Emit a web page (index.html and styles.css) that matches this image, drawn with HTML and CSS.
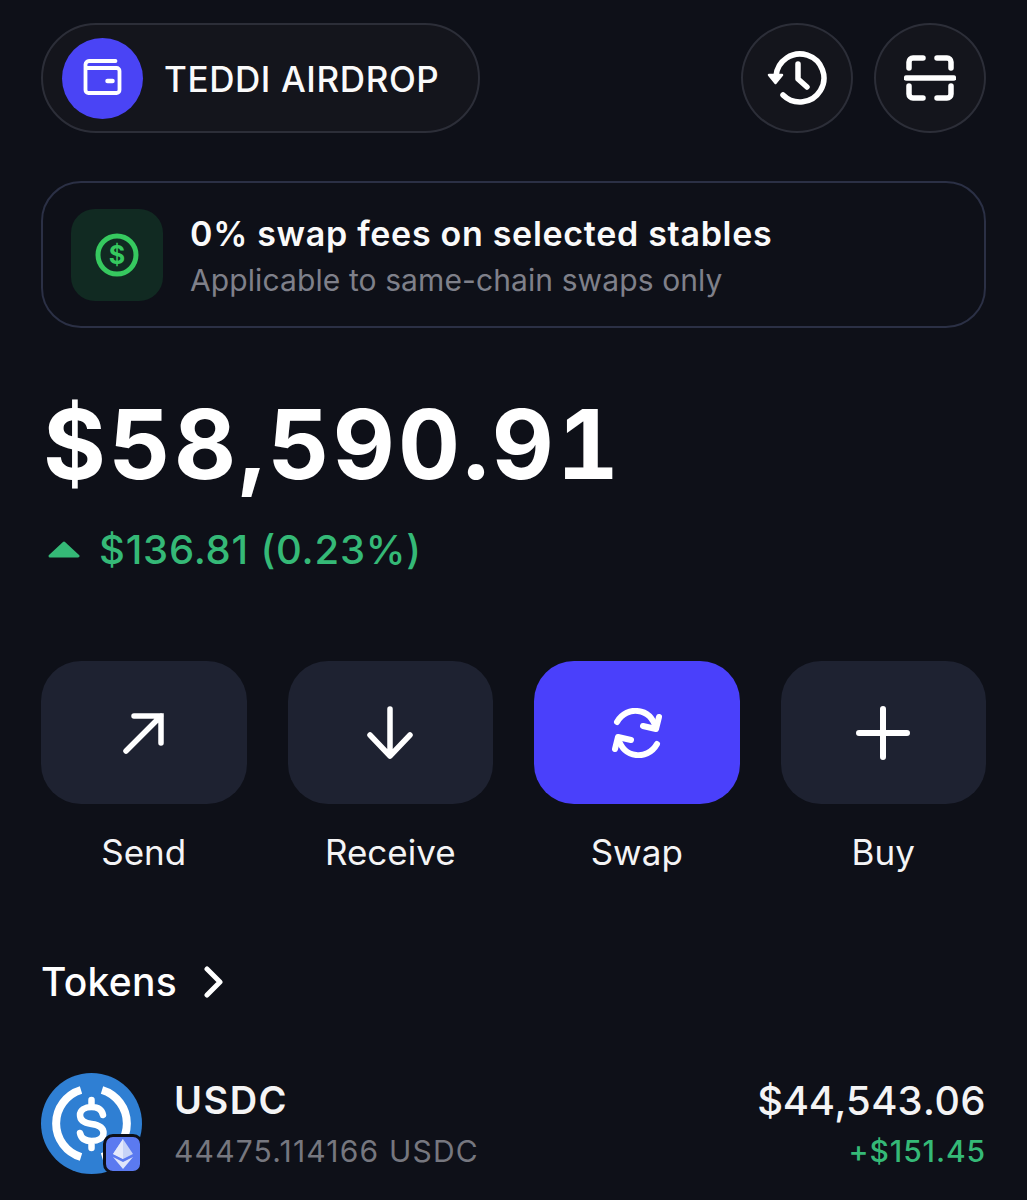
FILE: index.html
```html
<!DOCTYPE html>
<html lang="en">
<head>
<meta charset="utf-8">
<title>Wallet</title>
<link rel="stylesheet" href="styles.css">
</head>
<body>
<main class="app">
  <header class="topbar">
    <div class="account">
      <span class="account-icon">
        <svg width="40" height="40" viewBox="1.500 1 40 40" fill="none" stroke="#fff" stroke-width="3.800" stroke-linecap="round" stroke-linejoin="round"><path d="M34 4H7.500A3.500 3.500 0 0 0 4 7.500V33a3 3 0 0 0 3 3h28a3 3 0 0 0 3-3V14a3 3 0 0 0-3-3H4"/><path d="M26 24h5" stroke-width="4.500"/></svg>
      </span>
      <span class="account-name">TEDDI AIRDROP</span>
    </div>
    <div class="top-actions">
      <span class="round-btn">
        <svg width="60" height="56" viewBox="0 0 60 56" fill="none" stroke="#fff" stroke-width="5.500" stroke-linecap="round" stroke-linejoin="round"><path d="M9 26A24 24 0 1 1 16 45"/><path d="M31 14v15l9 8"/><path d="M2 25h13l-6.500 8z" fill="#fff" stroke-width="2.500"/></svg>
      </span>
      <span class="round-btn">
        <svg width="52" height="48" viewBox="0 0 52 48" fill="none" stroke="#fff" stroke-width="5.500" stroke-linecap="round" stroke-linejoin="round"><path d="M19 4H9a4 4 0 0 0-4 4v6M33 4h10a4 4 0 0 1 4 4v6M19 44H9a4 4 0 0 1-4-4v-8M33 44h10a4 4 0 0 0 4-4v-8"/><path d="M2.500 24h47"/></svg>
      </span>
    </div>
  </header>

  <section class="promo">
    <span class="promo-icon">
      <svg width="44" height="44" viewBox="0 0 44 44" fill="none"><circle cx="22" cy="22" r="19" stroke="#36c95f" stroke-width="5"/><text x="22" y="31" class="promo-dollar">$</text></svg>
    </span>
    <div class="promo-text">
      <div class="promo-title">0% swap fees on selected stables</div>
      <div class="promo-sub">Applicable to same-chain swaps only</div>
    </div>
  </section>

  <section class="balance">
    <div class="balance-value">$58,590.91</div>
    <div class="balance-delta">
      <svg width="32" height="18" viewBox="0 0 32 18"><path d="M16 2 30 15H2z" fill="#35b977" stroke="#35b977" stroke-width="3" stroke-linejoin="round"/></svg>
      <span>$136.81 (0.23%)</span>
    </div>
  </section>

  <section class="actions">
    <div class="action">
      <span class="action-btn">
        <svg width="44" height="44" viewBox="0 0 44 44" fill="none" stroke="#fff" stroke-width="5.500" stroke-linecap="round" stroke-linejoin="miter"><path d="M4 40 39 5M12 5h27v27"/></svg>
      </span>
      <span class="action-label">Send</span>
    </div>
    <div class="action">
      <span class="action-btn">
        <svg width="46" height="54" viewBox="0 0 46 54" fill="none" stroke="#fff" stroke-width="5.500" stroke-linecap="round" stroke-linejoin="round"><path d="M23 3v47M3 29l20 21 20-21"/></svg>
      </span>
      <span class="action-label">Receive</span>
    </div>
    <div class="action">
      <span class="action-btn action-btn-active">
        <svg width="60" height="50" viewBox="0 0 60 50" fill="none" stroke="#fff" stroke-width="6" stroke-linecap="round" stroke-linejoin="round"><path d="M10 14C15 5 24 2 31 3c9 1 15 7 18 17"/><path d="M52 9l-3 12-13-3"/><path d="M50 36c-5 9-14 12-21 11-9-1-15-7-18-17"/><path d="M8 41l3-12 13 3"/></svg>
      </span>
      <span class="action-label">Swap</span>
    </div>
    <div class="action">
      <span class="action-btn">
        <svg width="54" height="54" viewBox="0 0 54 54" fill="none" stroke="#fff" stroke-width="6" stroke-linecap="round"><path d="M27 3v48M3 27h48"/></svg>
      </span>
      <span class="action-label">Buy</span>
    </div>
  </section>

  <section class="tokens">
    <div class="tokens-head">
      <span>Tokens</span>
      <svg width="20" height="32" viewBox="0 0 20 32" fill="none" stroke="#fff" stroke-width="5" stroke-linecap="round" stroke-linejoin="round"><path d="M4 3l13 13L4 29"/></svg>
    </div>
    <div class="token-row">
      <span class="token-logo">
        <svg width="101" height="101" viewBox="0 0 101 101" fill="none"><circle cx="50.500" cy="50.500" r="50.500" fill="#2f7fd3"/><path d="M40 17A35 35 0 0 0 40 84M61 17A35 35 0 0 1 61 84" stroke="#fff" stroke-width="8"/><path d="M62 42c-1-5-5-8-11.500-8-6.500 0-11.500 3-11.500 8 0 5 4 8 11.500 9 7.500 1 12 4 12 9 0 5-5 8-12 8-6.500 0-10.500-3-11.500-8M50.500 27v7M50.500 68v7" stroke="#fff" stroke-width="6.500" stroke-linecap="round"/></svg>
        <span class="chain-badge">
          <svg width="20" height="30" viewBox="0 0 20 30"><path d="M10 0 20 15 10 20 0 15z" fill="#c7d3f7"/><path d="M10 0v20L0 15z" fill="#e4e9fb"/><path d="M0 18l10 5 10-5-10 12z" fill="#dfe5fa"/></svg>
        </span>
      </span>
      <div class="token-info">
        <div class="token-name">USDC</div>
        <div class="token-amount">44475.114166 USDC</div>
      </div>
      <div class="token-values">
        <div class="token-value">$44,543.06</div>
        <div class="token-change">+$151.45</div>
      </div>
    </div>
  </section>
</main>
</body>
</html>
```
FILE: styles.css
```css
* { box-sizing: border-box; }
html, body { margin: 0; padding: 0; }
body {
  background: #0e1018;
  color: #fff;
  font-family: Inter, "Liberation Sans", sans-serif;
  height: 1200px;
  overflow: hidden;
}
.app { padding: 23px 41px 0; }

.topbar { display: flex; justify-content: space-between; align-items: center; }
.account {
  width: 439px;
  height: 110px;
  display: flex;
  align-items: center;
  gap: 21px;
  padding-left: 19px;
  border: 2px solid #2c2e38;
  border-radius: 55px;
  background: #14151c;
}
.account-icon {
  width: 81px;
  height: 81px;
  border-radius: 50%;
  background: #4a44f5;
  display: flex;
  align-items: center;
  justify-content: center;
}
.account-name { padding-top: 2px; font-size: 35px; font-weight: 500; letter-spacing: 0.6px; color: #fafafa; }
.top-actions { display: flex; gap: 21px; }
.round-btn {
  width: 112px;
  height: 110px;
  border-radius: 50%;
  border: 2px solid #2c2e38;
  background: #14151c;
  display: flex;
  align-items: center;
  justify-content: center;
}

.promo {
  margin-top: 48px;
  height: 147px;
  border: 2px solid #2b3045;
  border-radius: 40px;
  display: flex;
  align-items: center;
  gap: 27px;
  padding-left: 28px;
}
.promo-icon {
  width: 92px;
  height: 92px;
  border-radius: 24px;
  background: #112a22;
  display: flex;
  align-items: center;
  justify-content: center;
}
.promo-dollar { font-size: 25px; font-weight: 700; fill: #36c95f; text-anchor: middle; }
.promo-text { padding-top: 3px; display: flex; flex-direction: column; gap: 7px; }
.promo-title { font-size: 34px; font-weight: 600; letter-spacing: 0.7px; line-height: 40px; color: #fafafa; }
.promo-sub { font-size: 30px; letter-spacing: 0.1px; line-height: 38px; color: #7f808a; }

.balance { margin-top: 61px; }
.balance-value {
  font-size: 96px;
  font-weight: 700;
  font-variant-numeric: tabular-nums;
  letter-spacing: 3px;
  line-height: 110px;
  padding-left: 2px;
}
.balance-delta {
  display: flex;
  align-items: center;
  gap: 19px;
  margin-top: 28px;
  padding-left: 7px;
  font-size: 40px;
  font-weight: 500;
  letter-spacing: 0.8px;
  line-height: 46px;
  color: #35b977;
}

.actions {
  margin-top: 88px;
  display: grid;
  grid-template-columns: repeat(4, 1fr);
  gap: 41px;
}
.action { display: flex; flex-direction: column; align-items: center; gap: 27px; }
.action-btn {
  width: 100%;
  height: 143px;
  border-radius: 40px;
  background: #1e2231;
  display: flex;
  align-items: center;
  justify-content: center;
}
.action-btn-active { background: #4a40fb; }
.action-label { font-size: 35px; line-height: 42px; color: #f4f4f5; }

.tokens { margin-top: 86px; }
.tokens-head {
  display: flex;
  align-items: center;
  gap: 26px;
  font-size: 39px;
  font-weight: 500;
  letter-spacing: 0.3px;
  line-height: 46px;
}
.token-row { display: flex; align-items: center; margin-top: 68px; }
.token-logo { position: relative; width: 101px; height: 101px; display: block; }
.chain-badge {
  position: absolute;
  right: -1px;
  bottom: 0;
  width: 40px;
  height: 40px;
  border-radius: 10px;
  background: #5b7af0;
  border: 3px solid #0e1018;
  display: flex;
  align-items: center;
  justify-content: center;
}
.token-info { margin-left: 32px; display: flex; flex-direction: column; gap: 9px; }
.token-name { font-size: 38px; font-weight: 600; letter-spacing: 1.5px; line-height: 45px; color: #f4f4f5; }
.token-amount { font-size: 30px; letter-spacing: 1.2px; line-height: 38px; color: #76777f; }
.token-values { margin-left: auto; display: flex; flex-direction: column; align-items: flex-end; gap: 8px; }
.token-value { font-size: 40px; font-weight: 500; font-variant-numeric: tabular-nums; line-height: 46px; color: #f4f4f5; }
.token-change { font-size: 30px; font-weight: 500; letter-spacing: 0.9px; line-height: 38px; color: #35b977; }
```
